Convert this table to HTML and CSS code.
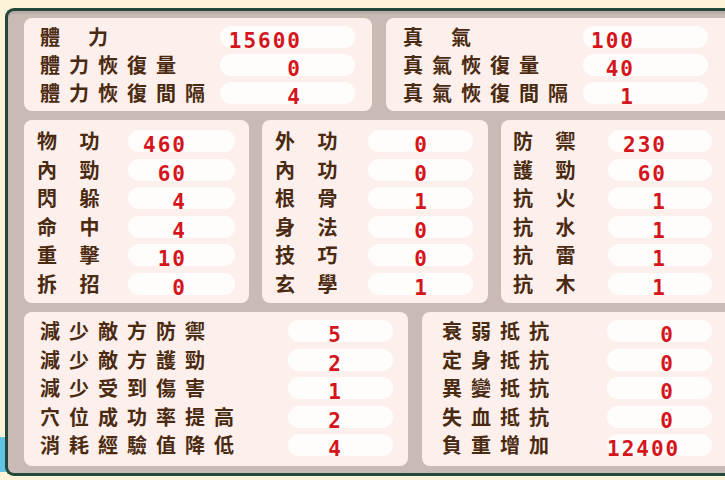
FILE: index.html
```html
<!DOCTYPE html>
<html lang="zh-Hant">
<head>
<meta charset="utf-8">
<title>屬性</title>
<link rel="stylesheet" href="styles.css">
</head>
<body>
<div class="deco"></div>
<div class="frame">
  <div class="row row1">
    <section class="panel p1">
      <div class="stat"><span class="label">體&ensp;力</span><span class="pill"><span class="val">15600</span></span></div>
      <div class="stat"><span class="label">體力恢復量</span><span class="pill"><span class="val">0</span></span></div>
      <div class="stat"><span class="label">體力恢復間隔</span><span class="pill"><span class="val">4</span></span></div>
    </section>
    <section class="panel p2">
      <div class="stat"><span class="label">真&ensp;氣</span><span class="pill"><span class="val">100</span></span></div>
      <div class="stat"><span class="label">真氣恢復量</span><span class="pill"><span class="val">40</span></span></div>
      <div class="stat"><span class="label">真氣恢復間隔</span><span class="pill"><span class="val">1</span></span></div>
    </section>
  </div>
  <div class="row row2">
    <section class="panel pa">
      <div class="stat"><span class="label">物 功</span><span class="pill"><span class="val">460</span></span></div>
      <div class="stat"><span class="label">內 勁</span><span class="pill"><span class="val">60</span></span></div>
      <div class="stat"><span class="label">閃 躲</span><span class="pill"><span class="val">4</span></span></div>
      <div class="stat"><span class="label">命 中</span><span class="pill"><span class="val">4</span></span></div>
      <div class="stat"><span class="label">重 擊</span><span class="pill"><span class="val">10</span></span></div>
      <div class="stat"><span class="label">拆 招</span><span class="pill"><span class="val">0</span></span></div>
    </section>
    <section class="panel pb">
      <div class="stat"><span class="label">外 功</span><span class="pill"><span class="val">0</span></span></div>
      <div class="stat"><span class="label">內 功</span><span class="pill"><span class="val">0</span></span></div>
      <div class="stat"><span class="label">根 骨</span><span class="pill"><span class="val">1</span></span></div>
      <div class="stat"><span class="label">身 法</span><span class="pill"><span class="val">0</span></span></div>
      <div class="stat"><span class="label">技 巧</span><span class="pill"><span class="val">0</span></span></div>
      <div class="stat"><span class="label">玄 學</span><span class="pill"><span class="val">1</span></span></div>
    </section>
    <section class="panel pc">
      <div class="stat"><span class="label">防 禦</span><span class="pill"><span class="val">230</span></span></div>
      <div class="stat"><span class="label">護 勁</span><span class="pill"><span class="val">60</span></span></div>
      <div class="stat"><span class="label">抗 火</span><span class="pill"><span class="val">1</span></span></div>
      <div class="stat"><span class="label">抗 水</span><span class="pill"><span class="val">1</span></span></div>
      <div class="stat"><span class="label">抗 雷</span><span class="pill"><span class="val">1</span></span></div>
      <div class="stat"><span class="label">抗 木</span><span class="pill"><span class="val">1</span></span></div>
    </section>
  </div>
  <div class="row row3">
    <section class="panel pl">
      <div class="stat"><span class="label">減少敵方防禦</span><span class="pill"><span class="val">5</span></span></div>
      <div class="stat"><span class="label">減少敵方護勁</span><span class="pill"><span class="val">2</span></span></div>
      <div class="stat"><span class="label">減少受到傷害</span><span class="pill"><span class="val">1</span></span></div>
      <div class="stat"><span class="label">穴位成功率提高</span><span class="pill"><span class="val">2</span></span></div>
      <div class="stat"><span class="label">消耗經驗值降低</span><span class="pill"><span class="val">4</span></span></div>
    </section>
    <section class="panel pr">
      <div class="stat"><span class="label">衰弱抵抗</span><span class="pill"><span class="val">0</span></span></div>
      <div class="stat"><span class="label">定身抵抗</span><span class="pill"><span class="val">0</span></span></div>
      <div class="stat"><span class="label">異變抵抗</span><span class="pill"><span class="val">0</span></span></div>
      <div class="stat"><span class="label">失血抵抗</span><span class="pill"><span class="val">0</span></span></div>
      <div class="stat"><span class="label">負重增加</span><span class="pill"><span class="val">12400</span></span></div>
    </section>
  </div>
</div>
</body>
</html>
```
FILE: styles.css
```css
html, body {
  margin: 0;
  padding: 0;
}
body {
  width: 725px;
  height: 480px;
  overflow: hidden;
  background: #fcf3d9;
  position: relative;
}
.deco {
  position: absolute;
  left: 0;
  top: 437px;
  width: 8px;
  height: 35px;
  background: #62c4e2;
}
.frame {
  position: relative;
  margin: 8px 0 0 5px;
  width: 820px;
  border: 3px solid #23473a;
  border-right: none;
  border-radius: 9px 0 0 9px;
  background: #c9bbb4;
  box-shadow: inset 0 3px 0 #b9ada7;
  padding: 7px 0 7px 16px;
  display: flex;
  flex-direction: column;
  gap: 9px;
}
.row {
  display: grid;
}
.row1 {
  height: 93px;
  grid-template-columns: 348px 346px;
  column-gap: 14px;
}
.row2 {
  height: 183px;
  grid-template-columns: 225px 226px 240px;
  column-gap: 13px;
}
.row3 {
  height: 154px;
  grid-template-columns: 384px 384px;
  column-gap: 14px;
}
.panel {
  background: #fdefeb;
  border-radius: 8px;
  display: grid;
  grid-template-columns: var(--label-w) var(--pill-w);
  grid-auto-rows: 22px;
  align-content: start;
  padding-left: var(--pad-l);
}
.stat {
  display: contents;
}
.label {
  font-family: "Noto Sans CJK TC", "Noto Sans CJK SC", sans-serif;
  font-weight: 700;
  font-size: 20px;
  line-height: 22px;
  letter-spacing: 9px;
  color: #4a2a10;
  white-space: nowrap;
}
.pill {
  background: #fffdfc;
  border-radius: 11px;
  height: 22px;
  line-height: 30px;
  white-space: nowrap;
}
.val {
  display: inline-block;
  width: var(--val-w);
  text-align: right;
  font-family: "DejaVu Sans Mono", "Liberation Mono", monospace;
  font-weight: 700;
  font-size: 21px;
  letter-spacing: 2px;
  color: #d4161c;
}
.p1 { --pad-l: 16px; --label-w: 180px; --pill-w: 135px; --val-w: 82px; padding-top: 8px; row-gap: 6px; }
.p2 { --pad-l: 17px; --label-w: 180px; --pill-w: 125px; --val-w: 52px; padding-top: 8px; row-gap: 6px; }
.pa { --pad-l: 13px; --label-w: 91px; --pill-w: 107px; --val-w: 59px; padding-top: 10px; row-gap: 6.6px; }
.pb { --pad-l: 13px; --label-w: 93px; --pill-w: 105px; --val-w: 61px; padding-top: 10px; row-gap: 6.6px; }
.pc { --pad-l: 12px; --label-w: 95px; --pill-w: 104px; --val-w: 59px; padding-top: 10px; row-gap: 6.6px; }
.pl { --pad-l: 16px; --label-w: 248px; --pill-w: 105px; --val-w: 55px; padding-top: 8px; row-gap: 6.5px; }
.pr { --pad-l: 20px; --label-w: 165px; --pill-w: 105px; --val-w: 68px; padding-top: 8px; row-gap: 6.5px; }
```
